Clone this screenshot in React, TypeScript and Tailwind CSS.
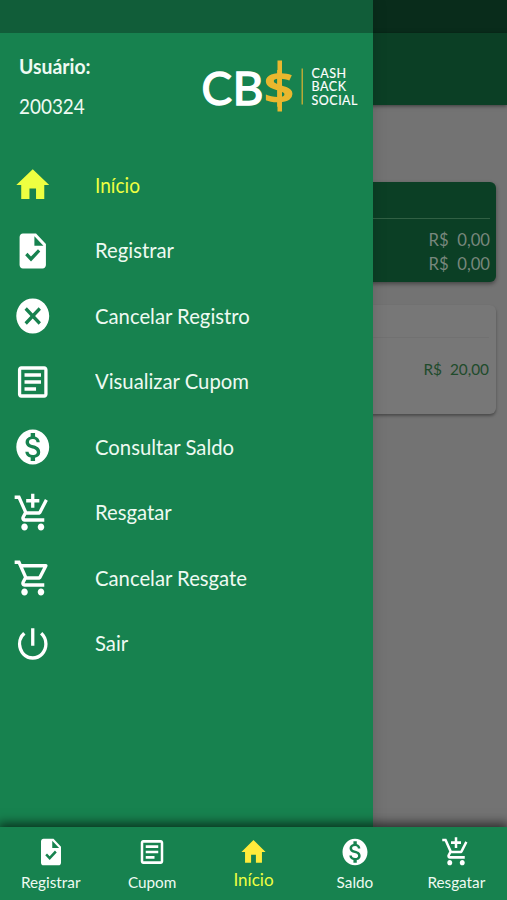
import type { IconType } from "react-icons";
import {
  MdAddShoppingCart,
  MdCancel,
  MdHome,
  MdMonetizationOn,
  MdOutlineArticle,
  MdOutlineShoppingCart,
  MdPowerSettingsNew,
  MdTask,
} from "react-icons/md";

type Item = {
  label: string;
  icon: IconType;
  active?: boolean;
};

const menuItems: Item[] = [
  { label: "Início", icon: MdHome, active: true },
  { label: "Registrar", icon: MdTask },
  { label: "Cancelar Registro", icon: MdCancel },
  { label: "Visualizar Cupom", icon: MdOutlineArticle },
  { label: "Consultar Saldo", icon: MdMonetizationOn },
  { label: "Resgatar", icon: MdAddShoppingCart },
  { label: "Cancelar Resgate", icon: MdOutlineShoppingCart },
  { label: "Sair", icon: MdPowerSettingsNew },
];

const tabs: Item[] = [
  { label: "Registrar", icon: MdTask },
  { label: "Cupom", icon: MdOutlineArticle },
  { label: "Início", icon: MdHome, active: true },
  { label: "Saldo", icon: MdMonetizationOn },
  { label: "Resgatar", icon: MdAddShoppingCart },
];

const Logo = () => (
  <svg width="160" height="60" viewBox="0 0 160 60" className="overflow-visible font-[Lato,sans-serif]">
    <g fontSize="46.5" fill="#fff" stroke="#fff" strokeWidth="1.4">
      <text x="-0.5" y="45.5" textLength="30.5" lengthAdjust="spacingAndGlyphs">
        C
      </text>
      <text x="30.5" y="45.5" textLength="31" lengthAdjust="spacingAndGlyphs">
        B
      </text>
    </g>
    <text
      x="61.5"
      y="44.5"
      fontSize="45"
      fontWeight="700"
      fill="#eab72e"
      textLength="31"
      lengthAdjust="spacingAndGlyphs"
      className="font-[Open_Sans,sans-serif]"
    >
      $
    </text>
    <rect x="75.5" y="1.5" width="4.5" height="51" fill="#eab72e" />
    <rect x="99.5" y="9.5" width="1.5" height="36" fill="#b9a936" />
    <g fontSize="12.5" fill="#fff" stroke="#fff" strokeWidth="0.15">
      <text x="109.5" y="18.5" textLength="34.5">CASH</text>
      <text x="109.5" y="32" textLength="34.5">BACK</text>
      <text x="109.5" y="45.5" textLength="46">SOCIAL</text>
    </g>
  </svg>
);

const Drawer = () => (
  <aside className="absolute inset-y-0 left-0 w-[372.5px] bg-[#17824f] text-[#eefaf2] shadow-[0_0_14px_rgba(0,0,0,0.15)]">
    <div className="h-[32.5px] bg-[#115d39]" />
    <div className="flex h-[120px] pl-[19px]">
      <div className="w-[183px] pt-[19px]">
        <p className="origin-left scale-x-[0.97] text-[20px] leading-7 font-bold">Usuário:</p>
        <p className="mt-3 origin-left scale-x-[0.9] text-[21px] leading-7">200324</p>
      </div>
      <div className="pt-[26px]">
        <Logo />
      </div>
    </div>
    <nav>
      {menuItems.map(({ label, icon: Icon, active }) => (
        <div
          key={label}
          className={`flex h-[65.5px] items-center pl-[13px] ${active ? "text-[#eeff41]" : ""}`}
        >
          <Icon preserveAspectRatio="none" className={`h-[42px] w-[39.5px] ${active ? "" : "text-white"}`} />
          <span
            className={`mb-0.5 ml-[42px] origin-left text-[21px] ${active ? "scale-x-[0.91]" : "scale-x-[0.965]"}`}
          >
            {label}
          </span>
        </div>
      ))}
    </nav>
  </aside>
);

const TabBar = () => (
  <footer className="absolute inset-x-0 bottom-0 flex h-[73px] bg-[#17824f] shadow-[0_-2px_10px_2px_rgba(0,0,0,0.6)]">
    {tabs.map(({ label, icon: Icon, active }) => (
      <div
        key={label}
        className={`flex flex-1 flex-col items-center pt-[9px] ${active ? "text-[#ffeb3b]" : "text-white"}`}
      >
        <Icon preserveAspectRatio="none" className={active ? "h-8 w-[29px]" : "h-8 w-[30px]"} />
        <span
          className={
            active ? "mt-0.5 text-[17px] leading-5 text-[#eeff41]" : "mt-1 text-[15.3px] leading-5 text-[#eefaf2]"
          }
        >
          {label}
        </span>
      </div>
    ))}
  </footer>
);

export default function App() {
  return (
    <div className="relative h-[900px] w-full overflow-hidden bg-[#737373] font-[Lato,sans-serif]">
      <div className="h-[32.5px] bg-[#092c1b]" />
      <header className="h-[72.5px] bg-[#0b3f25] shadow-[0_1px_4px_rgba(0,0,0,0.5)]" />
      <main className="px-[11px] pt-[77px]">
        <section className="h-[100px] rounded-md bg-[#0b3f25] px-[6px] text-right text-[17px] leading-6 text-[#78877d] shadow-[0_2px_4px_rgba(0,0,0,0.4)]">
          <div className="mb-[9px] h-[37px] border-b border-[#316044]" />
          <p className="origin-right scale-x-[0.98] whitespace-pre">R$  0,00</p>
          <p className="origin-right scale-x-[0.98] whitespace-pre">R$  0,00</p>
        </section>
        <section className="mt-[23px] h-[109px] rounded-md bg-[#777] px-[7px] text-right text-[16px] leading-6 text-[#204b2b] shadow-[0_2px_3px_rgba(0,0,0,0.35)]">
          <div className="mb-[19px] h-[33px] border-b border-[#717171]" />
          <p className="origin-right scale-x-[0.96] whitespace-pre">R$  20,00</p>
        </section>
      </main>
      <Drawer />
      <TabBar />
    </div>
  );
}
